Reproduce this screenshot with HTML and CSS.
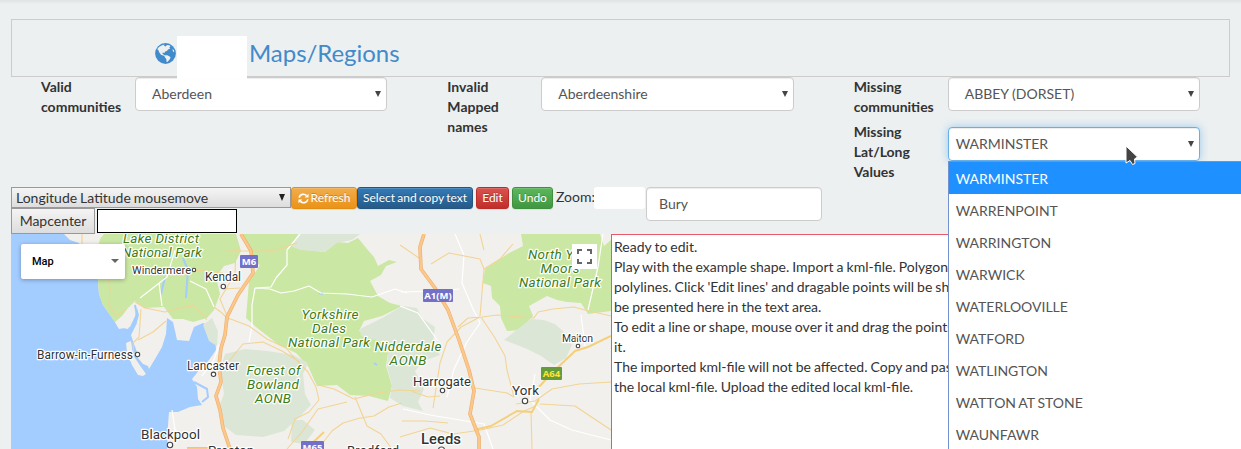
FILE: index.html
```html
<!DOCTYPE html>
<html lang="en">
<head>
<meta charset="utf-8">
<title>Maps/Regions</title>
<link rel="stylesheet" href="styles.css">
</head>
<body>
<header class="page-title">
  <svg class="globe" viewBox="0 0 21 21"><circle cx="10.5" cy="10.5" r="10.4" fill="#428bca"/><path fill="#ecf0f1" d="M2.2 6.2 4 3.9 7 2.2 9.6 1.6 9 2.8 10.6 3.4 12 2.1 14.5 2.3 15.4 3.8 14.2 4.6 15.3 5.6 13.1 6.6 11.8 8 10.2 8.6 9.4 10 7.9 9.6 7.2 10.6 8.4 11 8.7 12 10 12.3 12.4 12.3 14.6 13.6 15.6 14.6 14.6 16.6 12.6 18.8 11.6 19 11.3 16 9.6 14 9.6 12.9 6 11.7 4.2 9.2 3.3 7ZM17.4 6.1 18.8 7.1 19.3 9.3 18 8.5Z"/></svg>
  <span class="blank-name"></span>
  <h1>Maps/Regions</h1>
</header>

<section class="filters">
  <div class="column">
    <div class="group"><label>Valid communities</label><div class="select">Aberdeen<i></i></div></div>
  </div>
  <div class="column">
    <div class="group"><label>Invalid Mapped names</label><div class="select">Aberdeenshire<i></i></div></div>
  </div>
  <div class="column">
    <div class="group"><label>Missing communities</label><div class="select">ABBEY (DORSET)<i></i></div></div>
    <div class="group second"><label>Missing Lat/Long Values</label>
      <div class="select focused">WARMINSTER<i></i>
        <svg class="cursor" viewBox="0 0 14 21"><path d="M1 1V18L5 15.5 7.5 19.5 10 18.5 9.5 14 12.5 12Z" fill="#444" stroke="#fff" stroke-width="1"/></svg>
        <ul class="options">
          <li class="active">WARMINSTER</li><li>WARRENPOINT</li><li>WARRINGTON</li><li>WARWICK</li><li>WATERLOOVILLE</li><li>WATFORD</li><li>WATLINGTON</li><li>WATTON AT STONE</li><li>WAUNFAWR</li>
        </ul>
      </div>
    </div>
  </div>
</section>

<section class="toolbar">
  <div class="left-tools">
    <div class="mode">Longitude Latitude mousemove<i></i></div>
    <div class="center-row"><button class="mapcenter">Mapcenter</button><span class="center-value"></span></div>
  </div>
  <button class="btn refresh"><svg viewBox="0 0 12 12"><path d="M1.2 5A4.8 4.8 0 0 1 9.3 2.8M10.8 7A4.8 4.8 0 0 1 2.7 9.2" fill="none" stroke="#fff" stroke-width="1.8"/><path d="M11.5.8V5H7.2ZM.5 11.2V7H4.8Z" fill="#fff"/></svg>Refresh</button>
  <button class="btn copy">Select and copy text</button>
  <button class="btn edit">Edit</button>
  <button class="btn undo">Undo</button>
  <span class="zoom">Zoom:</span><span class="zoom-value"></span>
  <div class="place">Bury</div>
</section>

<main class="workspace">
  <div class="map">
    <svg class="tiles" viewBox="11 234 600 215">
      <rect x="11" y="234" width="600" height="215" fill="#f2f0ed"/>
      <!-- sea -->
      <path class="sea" d="M11 234H64L70 240 79 243 83 253 88 260 98 280 99 294 103 305 115 322 118 327 128 329 134 317 137 308 139 315 136 325 131 335 134 344 137 352 138 358 143 364 148 366 149 369 155 359 162 347 166 334 167 318 173 322 177 340 189 341 194 327 203 323 209 326 215 334 216 350 209 360 200 369 192 379 197 387 198 399 202 405 190 407 178 412 169 412 168 425 167 449H11Z"/>
      <path class="land" d="M115 322 135 303 137 312 130 327 119 329ZM126 343 131 341 133 355 141 367 146 374 143 376 138 375 132 365 127 353Z"/>
      <!-- protected areas -->
      <path class="forest" d="M104 234 100 239 95 262 98 280 99 294 103 305 115 322 122 316 128 308 135 301 144 308 164 307 173 319 183 319 193 322 207 318 214 310 220 294 216 277 224 266 235 263 241 251 236 234Z"/>
      <path class="forest" d="M242 234 251 250 253 262 260 265 249 282 246 318 256 327 279 345 296 353 308 366 317 386 337 385 350 395 369 396 388 401 392 386 386 366 388 353 378 338 359 331 364 321 382 316 402 306 390 303 378 296 370 281 381 275 386 266 397 262 389 260 378 266 374 257 367 249 358 238 348 243 337 242 325 252 307 250 298 243 300 234Z"/>
      <path class="forest" d="M521 234 523 246 509 253 500 259 485 269 483 283 491 286 492 298 500 306 501 318 507 331 520 330 533 316 529 306 547 296 557 300 567 302 581 303 588 314 611 311V240L604 246 600 234Z"/>
      <path class="aonb" d="M298 234 291 246 300 250 325 252 337 243 352 240 360 234ZM402 306 384 317 360 329 361 336 384 342 388 353 387 367 392 385 390 398 403 406 423 411 418 402 424 389 415 371 424 361 440 355 433 343 435 327 422 318 417 308ZM225 354 245 349 267 351 293 355 308 363 303 374 305 394 311 405 294 422 284 431 263 437 236 435 221 424 219 407 224 394 220 370ZM504 340 519 328 531 319 544 320 555 324 565 333 572 345 566 358 554 365 541 356 527 349ZM292 420 303 420 315 430 304 444 291 442ZM203 325 212 318 218 331 217 346 209 341Z"/>
      <path class="water" d="M183 258Q186 266 188 269L186 298M165 277L161 294M194 382L207 389 208 397 202 402M135 305Q138 317 135 325M319 293 323 294M374 363 377 365"/>
      <!-- minor roads -->
      <path class="lane" d="M175 250 167 277 140 298M159 283 162 306M190 281 206 289 214 307M300 234 287 250 287 265 276 278 271 287 255 288 252 305 252 326 249 342M255 288 270 289 281 293 294 291 309 286 321 293 347 294 372 297 395 289 407 293M202 376 214 360 219 345M172 410 175 430 186 439M400 306 418 313 438 341M455 234 464 255 462 283 473 309 480 323 467 342 454 369 447 397M603 234 598 267 588 310M585 346 581 315M401 292 440 291 459 289M403 409 430 415 460 420 484 424 493 449M535 374 530 400 550 420 572 430 611 440"/>
      <path class="road" d="M82 234 82 247M107 270 110 289 109 305 116 316 126 309M135 302 145 308 165 312 185 307 195 306 207 320M141 309 139 337 133 343 134 355M166 321 153 332 138 340M194 270 223 273M236 248 235 274 220 299 228 318 249 326 267 339 286 348 299 363 308 372 316 387 319 400 309 412 295 419 288 439M226 251 265 251 276 250 297 243M224 289 240 288M214 307 222 313 229 320M229 361 243 344 263 342 282 351 300 362M318 385 334 389 354 399 378 393 399 390 420 391M355 397 367 426 381 434 392 449M318 449 332 431 343 423 360 418 374 416 389 407 402 403M287 449 302 432 318 409 347 402M431 264 449 253 480 259 484 269 480 316M484 269 500 259 513 244M480 234 484 250M440 363 447 342 461 327 480 317M458 327 468 318 482 317 497 315 534 318 538 312 553 309 574 307 585 310 611 316M481 317 495 338 505 356 507 370 514 397M411 391 428 397 440 396M433 408 440 363M475 388 507 393 514 397M516 404 535 401 552 389 579 384 611 382M531 412 532 449M400 437 430 428 453 434 481 430 503 425 524 411 536 406M400 245 419 258M540 404 575 406 611 430M402 421 425 421 448 423"/>
      <path class="trunk" d="M536 390 553 372 575 351 588 347 611 336M516 411 532 412 539 399M474 430 491 426 517 411M306 449 324 432"/>
      <!-- motorways -->
      <path class="motor-edge" d="M241 234 251 251 253 273 238 295 227 317 225 335 221 348 219 365 221 382 216 396 220 410 223 428 230 449M424 234 420 247 421 269 435 288 448 310 459 340 469 370 474 391 470 414 479 437V449M187 449H211"/>
      <path class="motor" d="M241 234 251 251 253 273 238 295 227 317 225 335 221 348 219 365 221 382 216 396 220 410 223 428 230 449M424 234 420 247 421 269 435 288 448 310 459 340 469 370 474 391 470 414 479 437V449M187 449H211"/>
      <g class="park">
        <text x="161" y="242.5" textLength="76">Lake District</text><text x="162" y="257" textLength="80">National Park</text>
        <text x="330" y="318.5" textLength="57">Yorkshire</text><text x="329" y="332.5" textLength="34">Dales</text><text x="329" y="347" textLength="82">National Park</text>
        <text x="408" y="351" textLength="67">Nidderdale</text><text x="408" y="364.5" textLength="37">AONB</text>
        <text x="273.5" y="375" textLength="54">Forest of</text><text x="273" y="389" textLength="52">Bowland</text><text x="273" y="403" textLength="36">AONB</text>
        <text x="560" y="258.5" textLength="64">North York</text><text x="560" y="272.5" textLength="39">Moors</text><text x="560" y="286.5" textLength="82">National Park</text>
      </g>
      <g class="town">
        <text x="132" y="273.5" font-size="11" textLength="59">Windermere</text>
        <text x="205" y="281" font-size="12" textLength="36">Kendal</text>
        <text x="37" y="359" font-size="12" textLength="96">Barrow-in-Furness</text>
        <text x="187" y="369.5" font-size="12" textLength="52">Lancaster</text>
        <text x="141" y="438.5" font-size="13.5" textLength="59">Blackpool</text>
        <text x="413" y="385.5" font-size="13" textLength="58">Harrogate</text>
        <text x="512" y="395" font-size="13.5" textLength="27">York</text>
        <text x="562" y="342" font-size="10.5" textLength="31">Malton</text>
        <text x="421" y="443.5" font-size="15" font-weight="500" textLength="40">Leeds</text>
        <text x="208" y="455" font-size="13" textLength="46">Preston</text>
        <text x="347" y="455" font-size="13" textLength="52">Bradford</text>
      </g>
      <g class="dots"><circle cx="194" cy="270" r="1.7"/><circle cx="223.3" cy="286.5" r="2.2"/><circle cx="137.5" cy="354.5" r="2.2"/><circle cx="213.5" cy="374.3" r="2.2"/><circle cx="170" cy="445" r="2.7"/><circle cx="442.5" cy="390.5" r="2.2"/><circle cx="525" cy="401" r="2.7"/><circle cx="578" cy="346" r="1.8"/><circle cx="441.5" cy="450" r="3"/></g>
      <g class="shield"><rect x="240" y="255" width="18" height="13" rx="1"/><text x="249" y="265">M6</text><rect x="423" y="289" width="30" height="13" rx="1"/><text x="438" y="299">A1(M)</text><rect x="301" y="441" width="23" height="13" rx="1"/><text x="312.5" y="450.5">M65</text><rect class="green" x="541" y="367" width="21" height="13" rx="1"/><text class="yellow" x="551.5" y="377">A64</text></g>
    </svg>
    <div class="map-type">Map<i></i></div>
    <div class="fullscreen"><svg viewBox="0 0 15 15"><path d="M0 0H5V2H2V5H0ZM10 0H15V5H13V2H10ZM0 10H2V13H5V15H0ZM13 10H15V15H10V13H13Z" fill="#666"/></svg></div>
  </div>
  <div class="editor">Ready to edit.<br>Play with the example shape. Import a kml-file. Polygon<br>polylines. Click 'Edit lines' and dragable points will be sh<br>be presented here in the text area.<br>To edit a line or shape, mouse over it and drag the points<br>it.<br>The imported kml-file will not be affected. Copy and pas<br>the local kml-file. Upload the edited local kml-file.</div>
</main>
</body>
</html>
```
FILE: styles.css
```css
* { box-sizing: border-box; }
html { overflow: hidden; }
body { margin: 0; height: 449px; overflow: hidden; padding: 19px 11px 0; background: linear-gradient(#dfe3e4, #ecf0f1 4px) #ecf0f1; font: 14px/20px Lato, sans-serif; color: #333; }
.page-title { height: 58px; border: 1px solid #ccc; padding: 16px 0 0 143px; display: flex; align-items: flex-start; }
.globe { width: 21px; height: 21px; margin: 7px 1px 0 0; flex: none; }
.blank-name { width: 70px; height: 43px; background: #fff; position: relative; z-index: 2; }
h1 { margin: 3px 0 0 2px; font: 400 24px/28px Lato, sans-serif; letter-spacing: -.05px; color: #428bca; }
.filters { display: grid; grid-template-columns: repeat(3, 1fr); height: 110px; }
.column { padding: 0 30px; }
.group { display: grid; grid-template-columns: 94px 1fr; height: 45px; }
.group label { font-weight: 700; width: 82px; }
.select { position: relative; height: 34px; border: 1px solid #ccc; border-radius: 4px; background: #fff; padding: 6px 16px; color: #555; box-shadow: inset 0 1px 1px rgba(0,0,0,.075); }
.select > i { position: absolute; right: 5px; top: 13px; border: solid transparent; border-width: 6px 3.5px 0; border-top-color: #444; }
.second .select { margin-top: 5px; padding-left: 7px; }
.select.focused { border-color: #66afe9; box-shadow: inset 0 1px 1px rgba(0,0,0,.075), 0 0 8px rgba(102,175,233,.6); }
.cursor { position: absolute; left: 176px; top: 17px; width: 14px; height: 21px; z-index: 4; }
.options { position: absolute; z-index: 3; left: -1px; top: 33px; width: 293px; height: 289px; overflow: hidden; margin: 0; padding: 0; list-style: none; background: #fff; border: solid #7393d0; border-width: 1px 0 0 1px; word-spacing: -.8px; }
.options li { height: 32px; line-height: 32px; padding: 1px 7px 0; }
.options .active { background: #1e90ff; color: #fff; }
.toolbar { display: flex; height: 47px; align-items: flex-start; }
.left-tools { width: 280px; }
.mode { position: relative; height: 21px; border: 1px solid #999; background: linear-gradient(#f5f5f5, #ddd); line-height: 20px; padding-left: 4px; word-spacing: -.6px; }
.mode i { position: absolute; right: 5px; top: 6px; border: solid transparent; border-width: 7px 3.5px 0; border-top-color: #222; }
.center-row { display: flex; gap: 2px; }
.mapcenter { width: 84px; height: 26px; border: 1px solid #999; background: linear-gradient(#f4f4f4, #ddd); font: 14px/20px Lato, sans-serif; color: #333; padding: 0; }
.center-value { width: 140px; height: 24px; margin-top: 1px; border: 1px solid #000; background: #fff; }
.btn { height: 22px; border: 1px solid; border-radius: 3px; padding: 0 5px; color: #fff; font: 12px/18px Lato, sans-serif; white-space: nowrap; text-shadow: 0 -1px 0 rgba(0,0,0,.2); box-shadow: inset 0 1px 0 rgba(255,255,255,.15), 0 1px 1px rgba(0,0,0,.075); }
.btn svg { width: 11px; height: 11px; margin-right: 2px; vertical-align: -1.5px; }
.refresh { width: 66px; background: linear-gradient(#f0ad4e, #eb9316); border-color: #e38d13; }
.copy { width: 116px; background: linear-gradient(#337ab7, #265a88); border-color: #245580; word-spacing: -.8px; }
.edit { width: 33px; margin-left: 3px; background: linear-gradient(#d9534f, #c12e2a); border-color: #b92c28; }
.undo { width: 41px; margin-left: 3px; background: linear-gradient(#5cb85c, #419641); border-color: #3e8f3e; }
.zoom { width: 38px; margin-left: 3px; }
.zoom-value { width: 51px; height: 22px; background: #fff; border-radius: 3px; }
.place { width: 176px; height: 34px; margin-left: 1px; border: 1px solid #ccc; border-radius: 4px; background: #fff; padding: 6px 12px; color: #555; box-shadow: inset 0 1px 1px rgba(0,0,0,.075); }
.workspace { display: flex; height: 215px; overflow: hidden; }
.map { width: 600px; height: 215px; position: relative; overflow: hidden; flex: none; }
.tiles { display: block; width: 600px; height: 215px; }
.sea { fill: #a3ccff; }
.land { fill: #f2f0ed; }
.forest { fill: #cae7a3; }
.aonb { fill: #dce6d6; }
.water { fill: none; stroke: #a3ccff; stroke-width: 2; }
.lane, .road, .trunk, .motor, .motor-edge { fill: none; stroke-linejoin: round; }
.lane { stroke: #fff; stroke-width: 1.2; }
.road { stroke: #f2d494; stroke-width: 1.1; }
.trunk { stroke: #f4cf7c; stroke-width: 2; }
.motor-edge { stroke: #f0ac6b; stroke-width: 3.6; }
.motor { stroke: #fbc88b; stroke-width: 2.4; }
.tiles text { font-family: Roboto, sans-serif; paint-order: stroke; stroke: #fff; stroke-width: 2.5px; stroke-linejoin: round; }
.park text { font-size: 13.5px; font-style: italic; font-weight: 400; fill: #3c7d16; text-anchor: middle; }
.town { fill: #333; }
.dots { fill: #fff; stroke: #444; stroke-width: 1.1; }
.shield rect { fill: #7370c8; }
.shield .green { fill: #669b3c; }
.tiles .shield text { stroke: none; fill: #fff; font: 700 9.5px "Open Sans", sans-serif; text-anchor: middle; }
.tiles .shield .yellow { fill: #ffe534; }
.map-type { position: absolute; left: 10px; top: 10px; width: 104px; height: 35px; border-radius: 2px; background: #fff; box-shadow: 0 1px 4px rgba(0,0,0,.3); padding-left: 11px; font: 500 11px/35px Roboto, sans-serif; color: #000; }
.map-type i { position: absolute; right: 6px; top: 15px; border: solid transparent; border-width: 4px 4px 0; border-top-color: #666; }
.fullscreen { position: absolute; left: 561px; top: 10px; width: 25px; height: 25px; padding: 5px; background: #fff; }
.fullscreen svg { display: block; width: 15px; height: 15px; }
.editor { flex: 1; height: 215px; border: 1px solid #e9586a; border-bottom: 0; background: #fff; padding: 2px; white-space: nowrap; overflow: hidden; word-spacing: -.55px; }
```
